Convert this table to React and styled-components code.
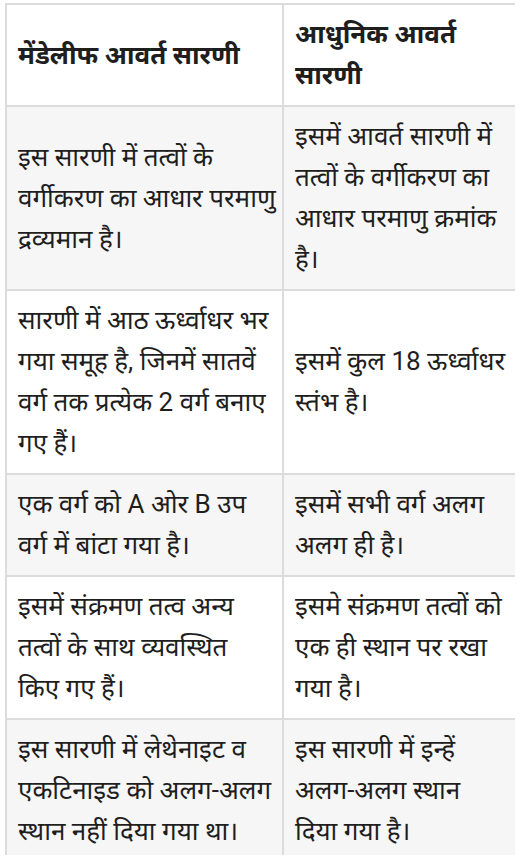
import React from 'react';
import styled, { createGlobalStyle } from 'styled-components';

const GlobalStyle = createGlobalStyle`
  html, body {
    margin: 0;
    padding: 0;
    background: #ffffff;
  }
  body {
    font-family: Roboto, "Noto Sans", "Noto Sans Devanagari", "Lohit Devanagari", sans-serif;
    color: #1e1e1e;
  }
`;

const Page = styled.div`
  width: 530px;
  height: 866px;
  padding: 3px 0 0 5px;
  box-sizing: border-box;
  background: #ffffff;
`;

const Clip = styled.div`
  width: 510px;
  height: 852px;
  overflow: hidden;
`;

const Table = styled.table`
  width: 510px;
  border-collapse: collapse;
  table-layout: fixed;
  border: 2px solid #e0e0e0;
`;

const Col = styled.col`
  width: ${(p) => p.$w}px;
`;

const Row = styled.tr`
  background: ${(p) => (p.$shade ? '#f6f6f6' : '#ffffff')};
`;

const Cell = styled.td`
  border: 2px solid #dcdcdc;
  padding: 9px 6px 9px 11px;
  vertical-align: middle;
  font-size: 26px;
  font-weight: ${(p) => (p.$head ? 700 : 400)};
  overflow: hidden;
`;

const Line = styled.div`
  height: 41px;
  line-height: 41px;
  white-space: nowrap;
`;

const rows = [
  ['मेंडेलीफ आवर्त सारणी', 'आधुनिक आवर्त\nसारणी'],
  [
    'इस सारणी में तत्वों के\nवर्गीकरण का आधार परमाणु\nद्रव्यमान है।',
    'इसमें आवर्त सारणी में\nतत्वों के वर्गीकरण का\nआधार परमाणु क्रमांक\nहै।',
  ],
  [
    'सारणी में आठ ऊर्ध्वाधर भर\nगया समूह है, जिनमें सातवें\nवर्ग तक प्रत्येक 2 वर्ग बनाए\nगए हैं।',
    'इसमें कुल 18 ऊर्ध्वाधर\nस्तंभ है।',
  ],
  ['एक वर्ग को A ओर B उप\nवर्ग में बांटा गया है।', 'इसमें सभी वर्ग अलग\nअलग ही है।'],
  [
    'इसमें संक्रमण तत्व अन्य\nतत्वों के साथ व्यवस्थित\nकिए गए हैं।',
    'इसमे संक्रमण तत्वों को\nएक ही स्थान पर रखा\nगया है।',
  ],
  [
    'इस सारणी में लेथेनाइट व\nएकटिनाइड को अलग-अलग\nस्थान नहीं दिया गया था।',
    'इस सारणी में इन्हें\nअलग-अलग स्थान\nदिया गया है।',
  ],
];

export default function App() {
  return (
    <>
      <GlobalStyle />
      <Page>
        <Clip>
          <Table>
            <colgroup>
              <Col $w={277} />
              <Col $w={233} />
            </colgroup>
            <tbody>
              {rows.map((r, i) => (
                <Row key={i} $shade={i % 2 === 1}>
                  {r.map((text, j) => (
                    <Cell key={j} $head={i === 0}>
                      {text.split('\n').map((ln, k) => (
                        <Line key={k}>{ln}</Line>
                      ))}
                    </Cell>
                  ))}
                </Row>
              ))}
            </tbody>
          </Table>
        </Clip>
      </Page>
    </>
  );
}
